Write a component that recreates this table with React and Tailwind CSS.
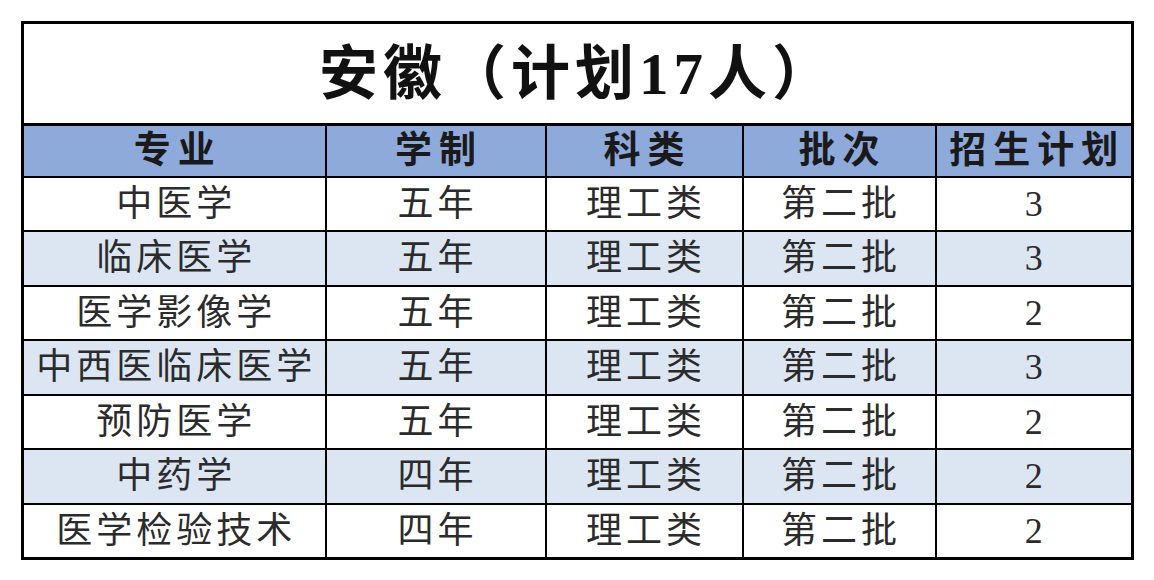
import React from "react";

const rows = [
  ["中医学", "五年", "理工类", "第二批", "3"],
  ["临床医学", "五年", "理工类", "第二批", "3"],
  ["医学影像学", "五年", "理工类", "第二批", "2"],
  ["中西医临床医学", "五年", "理工类", "第二批", "3"],
  ["预防医学", "五年", "理工类", "第二批", "2"],
  ["中药学", "四年", "理工类", "第二批", "2"],
  ["医学检验技术", "四年", "理工类", "第二批", "2"],
];

const headers = ["专业", "学制", "科类", "批次", "招生计划"];

const font = { fontFamily: '"Liberation Serif", "Noto Sans CJK SC", serif' };

export default function App() {
  return (
    <div className="w-[1154px] h-[580px] bg-white pl-[21px] pt-[21px]" style={font}>
      <table className="table-fixed border-collapse border-[3px] border-black w-[1110px]">
        <colgroup>
          <col className="w-[303px]" />
          <col className="w-[220px]" />
          <col className="w-[197px]" />
          <col className="w-[193px]" />
          <col className="w-[197px]" />
        </colgroup>
        <tbody>
          {/* title */}
          <tr className="h-[102px]">
            <td
              colSpan={5}
              className="p-0 text-center align-middle text-[59px] font-bold tracking-[5px] text-[#111] leading-none pt-[2px]"
            >
              安徽（计划17人）
            </td>
          </tr>

          {/* header */}
          <tr className="h-[52px] bg-[#8eaadb]">
            {headers.map((h) => (
              <td
                key={h}
                className="p-0 border-2 border-t-[3px] border-black text-center align-middle text-[37px] font-bold tracking-[7px] text-[#1a1a1a] leading-none"
              >
                <span className="pl-[7px]">{h}</span>
              </td>
            ))}
          </tr>

          {/* body */}
          {rows.map((r, i) => (
            <tr
              key={r[0]}
              className={i % 2 === 1 ? "h-[54.5px] bg-[#dce6f2]" : "h-[54.5px] bg-white"}
            >
              {r.map((c, j) => (
                <td
                  key={j}
                  className="p-0 border-2 border-black text-center align-middle text-[36px] tracking-[4px] text-[#2b2b2b] leading-none"
                >
                  <span className="pl-[4px]">{c}</span>
                </td>
              ))}
            </tr>
          ))}
        </tbody>
      </table>
    </div>
  );
}
